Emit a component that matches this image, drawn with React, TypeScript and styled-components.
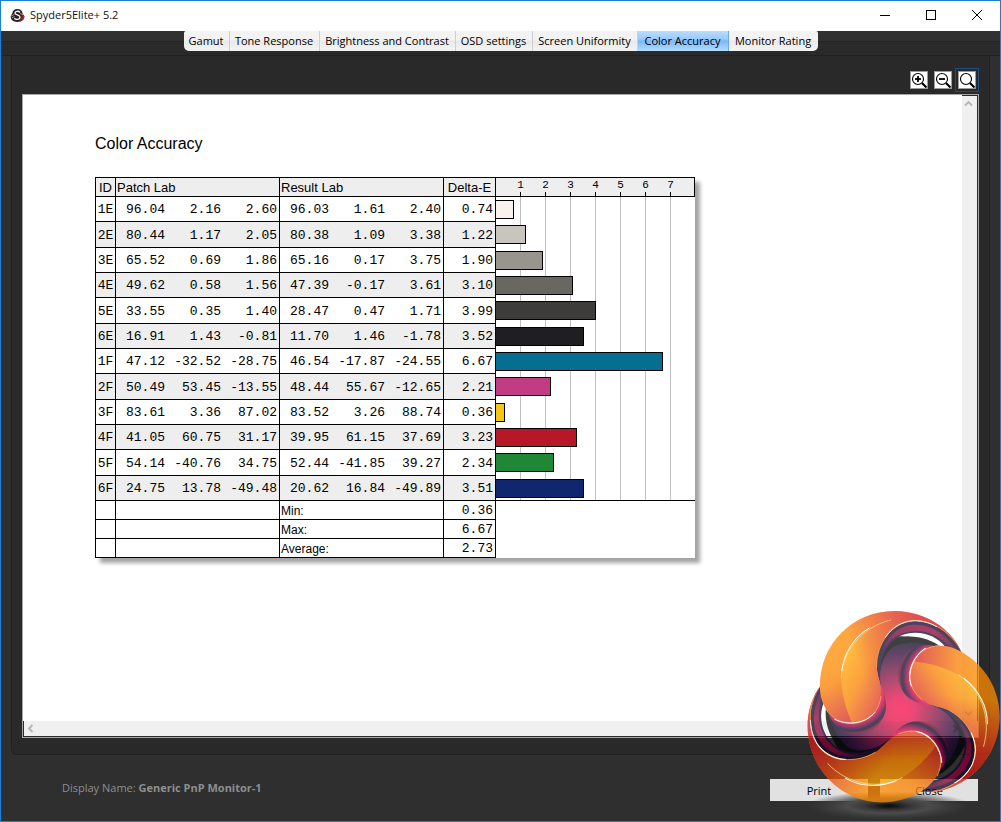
import React from "react";
import styled, { createGlobalStyle, css } from "styled-components";

const ui = `"Open Sans", "Noto Sans", sans-serif`;
const sans = `"Liberation Sans", Arial, sans-serif`;
const mono = `"Liberation Mono", "Courier New", monospace`;

const GlobalStyle = createGlobalStyle`
  *, *::before, *::after { box-sizing: border-box; }
  body { margin: 0; font-family: ${ui}; font-size: 11px; background: #2f2f2f; }
  button { font: inherit; margin: 0; padding: 0; border: 0; }
`;

const Window = styled.div`
  position: relative;
  display: flex;
  flex-direction: column;
  min-height: 100vh;
  border: 1px solid #1a80d6;
  background: #2f2f2f;
`;

const TitleBar = styled.header`
  display: flex;
  align-items: center;
  height: 30px;
  padding: 0 0 2px 9px;
  background: #fff;
  color: #111;
`;

const Title = styled.h1`
  flex: 1;
  margin: 0 0 0 5px;
  font-size: 11px;
  line-height: 16px;
  font-weight: 400;
`;

const WindowButton = styled.button`
  display: grid;
  place-items: center;
  width: 46px;
  height: 28px;
  background: none;
`;

const TabStrip = styled.nav`
  display: flex;
  justify-content: center;
  align-items: flex-start;
  height: 25px;
  background: linear-gradient(#313131 0 10px, #232323 10px 11px, #2a2a2a 11px);
  border-bottom: 1px solid #212121;
`;

const TabList = styled.div`
  display: flex;
  height: 20px;
  border-radius: 2px 2px 5px 5px;
  overflow: hidden;
`;

const Tab = styled.button<{ $width: number; $active?: boolean }>`
  width: ${(p) => p.$width}px;
  height: 20px;
  line-height: 20px;
  white-space: nowrap;
  color: #000;
  background: linear-gradient(#f3f3f3 0 9px, #e9e9e9 10px, #f4f4f4);
  border-right: 1px solid #cfcfcf;
  &:last-child { border-right: 0; }
  ${(p) =>
    p.$active &&
    css`
      background: linear-gradient(#b9dcff, #9bcbfd 8px, #7ab8fb 10px, #b5dbff);
      border-right-color: #6fa9e8;
    `}
`;

const Panel = styled.main`
  flex: 1;
  display: flex;
  flex-direction: column;
  margin: 0 10px;
  padding: 0 10px 16px;
  background: #292929;
  border: 1px solid #202020;
  border-top: 0;
  border-radius: 0 0 6px 6px;
`;

const ZoomBar = styled.div`
  display: flex;
  justify-content: flex-end;
  align-items: center;
  gap: 6px;
  height: 38px;
  padding: 9px 3px 0 0;
`;

const ZoomButton = styled.button<{ $focused?: boolean }>`
  width: 18px;
  height: 18px;
  background: #fff;
  border: 1px solid #9a9a9a;
  outline: ${(p) => (p.$focused ? "1px solid #1b4f80" : "none")};
  outline-offset: 2px;
  svg { display: block; }
`;

const Viewer = styled.section`
  flex: 1;
  display: grid;
  grid-template-columns: 1fr 16px;
  grid-template-rows: 1fr 16px;
  border: 1px solid #a6a6a6;
  background: #f0f0f0;
`;

const Sheet = styled.article`
  padding: 39px 72px 60px;
  background: #fff;
  color: #000;
  font-family: ${sans};
`;

const SheetTitle = styled.h2`
  margin: 0 0 23px;
  font-size: 16px;
  line-height: 20px;
  font-weight: 400;
`;

const VerticalScroll = styled.div`
  display: flex;
  flex-direction: column;
  justify-content: space-between;
  align-items: flex-start;
  background: #f0f0f0;
  border-top: 1px solid #2b2b2b;
  border-right: 1px solid #2b2b2b;
`;

const HorizontalScroll = styled.div`
  display: flex;
  justify-content: space-between;
  background: #f0f0f0;
  border-left: 1px solid #2b2b2b;
  border-bottom: 1px solid #2b2b2b;
`;

const ScrollButton = styled.button`
  display: grid;
  place-items: center;
  width: 13px;
  height: 15px;
  background: none;
`;

const Report = styled.table`
  width: 600px;
  table-layout: fixed;
  border-collapse: separate;
  border-spacing: 0;
  background: #fff;
  box-shadow: 5px 5px 4px rgba(0, 0, 0, 0.36);
  font-size: 13px;
`;

const HeadCell = styled.th<{ $align?: string }>`
  height: 20px;
  padding: 2px 1px 0;
  background: #eee;
  border: solid #000;
  border-width: 1px 1px 1px 0;
  font-weight: 400;
  line-height: 16px;
  text-align: ${(p) => p.$align ?? "left"};
  &:first-child { border-left-width: 1px; }
`;

const AxisHead = styled(HeadCell)`
  padding-top: 0;
  font-family: ${mono};
  font-size: 11px;
`;

const Axis = styled.div`
  display: flex;
  padding-left: 11px;
`;

const AxisMark = styled.span`
  display: flex;
  flex-direction: column;
  align-items: center;
  width: 25px;
  height: 18px;
  line-height: 14px;
  &::after {
    content: "";
    width: 1px;
    height: 4px;
    background: #000;
  }
`;

const Row = styled.tr`
  height: 25px;
  &:nth-child(3n + 2) { height: 26px; }
  &:nth-child(even) > * { background-color: #eee; }
`;

const cell = css`
  padding: 2px 2px 0 0;
  border: solid #000;
  border-width: 0 1px 1px 0;
  font-family: ${mono};
  line-height: 16px;
  font-weight: 400;
  &:first-child { border-left-width: 1px; }
`;

const IdCell = styled.th`
  ${cell}
  text-align: center;
  padding: 2px 0 0;
`;

const NumberCell = styled.td`
  ${cell}
  text-align: right;
`;

const Lab = styled.div`
  display: grid;
  grid-template-columns: 1fr 56px 56px;
`;

const PlotCell = styled.td<{ $last: boolean }>`
  padding: 0;
  vertical-align: top;
  border-bottom: ${(p) => (p.$last ? "1px solid #000" : "0")};
  tr:nth-child(n) > & {
    background: repeating-linear-gradient(90deg, #fff 0 24px, #c0c0c0 24px 25px);
  }
`;

const Bar = styled.div<{ $color: string }>`
  height: 19px;
  margin-top: 3px;
  background: ${(p) => p.$color};
  border: 1px solid #000;
  border-left: 0;
`;

const SummaryRow = styled.tr`
  height: 19px;
`;

const SummaryLabel = styled.th`
  ${cell}
  padding: 2px 0 0 1px;
  font-family: ${sans};
  font-size: 12px;
  text-align: left;
`;

const SummarySpace = styled.td`
  padding: 0;
`;

const Footer = styled.footer`
  display: flex;
  align-items: center;
  gap: 12px;
  height: 66px;
  padding: 4px 22px 0 61px;
`;

const DisplayName = styled.p`
  flex: 1;
  margin: 0;
  padding-bottom: 4px;
  line-height: 16px;
  color: #8e8e8e;
`;

const ActionButton = styled.button`
  width: 98px;
  height: 22px;
  background: #e1e1e1;
  color: #000;
`;

const Watermark = styled.svg`
  position: absolute;
  right: -1px;
  bottom: -1px;
  width: 241px;
  height: 222px;
  pointer-events: none;
`;

const tabs = [
  { label: "Gamut", width: 46 },
  { label: "Tone Response", width: 90 },
  { label: "Brightness and Contrast", width: 136 },
  { label: "OSD settings", width: 77 },
  { label: "Screen Uniformity", width: 105 },
  { label: "Color Accuracy", width: 91, active: true },
  { label: "Monitor Rating", width: 89 },
];

type Patch = { id: string; patch: string[]; result: string[]; delta: string; color: string };

const patches: Patch[] = [
  { id: "1E", patch: ["96.04", "2.16", "2.60"], result: ["96.03", "1.61", "2.40"], delta: "0.74", color: "#f9f1ee" },
  { id: "2E", patch: ["80.44", "1.17", "2.05"], result: ["80.38", "1.09", "3.38"], delta: "1.22", color: "#c8c4be" },
  { id: "3E", patch: ["65.52", "0.69", "1.86"], result: ["65.16", "0.17", "3.75"], delta: "1.90", color: "#98958e" },
  { id: "4E", patch: ["49.62", "0.58", "1.56"], result: ["47.39", "-0.17", "3.61"], delta: "3.10", color: "#686761" },
  { id: "5E", patch: ["33.55", "0.35", "1.40"], result: ["28.47", "0.47", "1.71"], delta: "3.99", color: "#3d3c3b" },
  { id: "6E", patch: ["16.91", "1.43", "-0.81"], result: ["11.70", "1.46", "-1.78"], delta: "3.52", color: "#1f1f21" },
  { id: "1F", patch: ["47.12", "-32.52", "-28.75"], result: ["46.54", "-17.87", "-24.55"], delta: "6.67", color: "#066f91" },
  { id: "2F", patch: ["50.49", "53.45", "-13.55"], result: ["48.44", "55.67", "-12.65"], delta: "2.21", color: "#c23c83" },
  { id: "3F", patch: ["83.61", "3.36", "87.02"], result: ["83.52", "3.26", "88.74"], delta: "0.36", color: "#f5c614" },
  { id: "4F", patch: ["41.05", "60.75", "31.17"], result: ["39.95", "61.15", "37.69"], delta: "3.23", color: "#b71726" },
  { id: "5F", patch: ["54.14", "-40.76", "34.75"], result: ["52.44", "-41.85", "39.27"], delta: "2.34", color: "#1f8735" },
  { id: "6F", patch: ["24.75", "13.78", "-49.48"], result: ["20.62", "16.84", "-49.89"], delta: "3.51", color: "#10266e" },
];

const summary = [
  ["Min:", "0.36"],
  ["Max:", "6.67"],
  ["Average:", "2.73"],
];

function AppIcon() {
  return (
    <svg width="15" height="15" viewBox="0 0 45 45" aria-hidden="true">
      <path d="M22 3C32 3 37 8 38 17L43 25C43 36 34 42 22 42C10 42 2 36 2 25L7 16C8 8 13 3 22 3Z" fill="#262224" />
      <path d="M36 15L43 25C43 36 35 41 26 41C34 34 38 25 36 15Z" fill="#a81f2c" />
      <path d="M30 13C26 8 15 9 15 15C15 22 30 20 30 28C30 35 18 36 13 31" fill="none" stroke="#fff" strokeWidth="4" />
      <path d="M4 24L13 19M5 29L14 26M30 17L39 19" stroke="#ddd" strokeWidth="2" />
    </svg>
  );
}

function Magnifier({ sign }: { sign?: "plus" | "minus" }) {
  return (
    <svg width="16" height="16" viewBox="0 0 16 16" fill="none" stroke="#000" aria-hidden="true">
      <circle cx="7" cy="7" r="5.5" strokeWidth="1.1" />
      <path d="M11 11L15.5 15.5" strokeWidth="2.2" />
      {sign && <path d="M4 7H10" strokeWidth="1.8" />}
      {sign === "plus" && <path d="M7 4V10" strokeWidth="1.8" />}
    </svg>
  );
}

const turns = { up: 0, right: 90, down: 180, left: 270 };

function Chevron({ to }: { to: keyof typeof turns }) {
  return (
    <svg width="9" height="9" viewBox="0 0 9 9" fill="none" stroke="#b4b4b4" strokeWidth="1.8" aria-hidden="true">
      <path d="M1 6.5L4.5 3L8 6.5" transform={`rotate(${turns[to]} 4.5 4.5)`} />
    </svg>
  );
}

const lobe =
  "M180 265C176 132 278 33 405 33C496 35 574 84 606 160C574 98 520 62 462 62C392 68 350 132 350 196C350 226 362 244 363 272C362 332 322 371 278 370C218 368 181 322 180 265Z";

function Logo() {
  const angles = [0, 120, 240];
  return (
    <Watermark viewBox="0 0 723 666" aria-hidden="true">
      <defs>
        <radialGradient id="core" gradientUnits="userSpaceOnUse" cx="422" cy="330" r="222">
          <stop offset="0" stopColor="#f80a48" />
          <stop offset="0.18" stopColor="#e50d48" />
          <stop offset="0.5" stopColor="#7c1040" />
          <stop offset="0.76" stopColor="#2c0838" />
          <stop offset="0.93" stopColor="#0c0624" />
          <stop offset="1" stopColor="#000" />
        </radialGradient>
        <linearGradient id="outer" gradientUnits="userSpaceOnUse" x1="190" y1="200" x2="270" y2="350">
          <stop offset="0" stopColor="#ff8c00" />
          <stop offset="0.35" stopColor="#fa7e00" />
          <stop offset="1" stopColor="#d8301c" />
        </linearGradient>
        <linearGradient id="leaf" gradientUnits="userSpaceOnUse" x1="250" y1="200" x2="375" y2="265">
          <stop offset="0" stopColor="#ffa200" />
          <stop offset="0.45" stopColor="#fa8200" />
          <stop offset="1" stopColor="#e03c1c" />
        </linearGradient>
        <linearGradient id="tail" gradientUnits="userSpaceOnUse" x1="270" y1="130" x2="480" y2="40">
          <stop offset="0" stopColor="#da2418" stopOpacity="0" />
          <stop offset="0.7" stopColor="#da2418" stopOpacity="0.9" />
          <stop offset="1" stopColor="#d4141c" />
        </linearGradient>
        <linearGradient id="band" gradientUnits="userSpaceOnUse" x1="355" y1="190" x2="600" y2="130">
          <stop offset="0" stopColor="#0c0428" />
          <stop offset="0.3" stopColor="#7c0034" />
          <stop offset="0.75" stopColor="#8c0034" />
          <stop offset="1" stopColor="#240428" />
        </linearGradient>
        <radialGradient id="crescent" gradientUnits="userSpaceOnUse" cx="276" cy="275" r="132">
          <stop offset="0.7" stopColor="#e60046" />
          <stop offset="0.79" stopColor="#80003a" />
          <stop offset="0.87" stopColor="#12062c" />
          <stop offset="0.91" stopColor="#1c0622" />
          <stop offset="0.93" stopColor="#5c0424" stopOpacity="0.8" />
          <stop offset="1" stopColor="#5c0424" stopOpacity="0.3" />
        </radialGradient>
        <radialGradient id="ground">
          <stop offset="0" stopColor="#090909" />
          <stop offset="0.3" stopColor="#3a3a3a" />
          <stop offset="0.5" stopColor="#4c4c4c" />
          <stop offset="1" stopColor="#3a3a3a" stopOpacity="0" />
        </radialGradient>
        <clipPath id="lobe-clip">
          <path d={lobe} />
        </clipPath>
      </defs>
      <ellipse cx="385" cy="618" rx="250" ry="44" fill="url(#ground)" />
      <g opacity="0.75">
        <circle cx="422" cy="330" r="221" fill="url(#core)" />
        {angles.map((a) => (
          <g key={a} transform={`rotate(${a} 422 330)`}>
            <path d="M352 166C372 136 400 116 440 110C480 108 520 122 545 143C500 124 440 122 404 138C376 154 362 190 358 232C350 214 348 190 352 166Z" fill="#000" />
            <path d="M206 340C222 392 270 412 316 400C366 382 386 332 376 296C372 272 360 250 350 220L250 240Z" fill="url(#crescent)" />
            <path d="M363 262C346 225 344 165 368 120C390 78 425 60 465 60C530 62 588 108 608 166L600 186C590 168 572 152 556 141C528 104 470 86 420 108C380 130 352 175 363 262Z" fill="#10052a" />
            <path d="M358 200C358 140 392 90 446 76C514 66 566 108 598 164C582 146 568 136 556 129C522 94 466 82 418 104C384 120 362 158 358 200Z" fill="url(#band)" />
          </g>
        ))}
        {angles.map((a) => (
          <g key={a} transform={`rotate(${a} 422 330)`}>
            <path d={lobe} fill="url(#outer)" />
            <g clipPath="url(#lobe-clip)">
              <path d="M440 52C330 54 246 130 244 228C244 280 258 330 278 372L480 380L480 52Z" fill="url(#leaf)" />
            </g>
            <path d={lobe} fill="url(#tail)" />
          </g>
        ))}
      </g>
      {angles.map((a) => (
        <g key={a} transform={`rotate(${a} 422 330)`} fill="none" strokeLinecap="round">
          <path d="M350 200C350 132 392 68 462 62C510 62 560 90 586 124" stroke="#f6b04c" strokeWidth="2" />
          <path d="M376 112C396 82 424 64 462 62C488 62 510 68 530 80" stroke="#fff3dc" strokeWidth="3" />
          <path d="M196 326C218 358 246 370 278 370C322 369 356 338 363 290" stroke="#ffc65c" strokeWidth="2" />
          <path d="M224 358C262 378 316 371 344 338" stroke="#fff" strokeWidth="3" />
          <path d="M244 232C246 158 302 82 392 60" stroke="#ffdc92" strokeWidth="2" />
          <path d="M245 212C252 158 284 108 328 84" stroke="#fff" strokeWidth="3" />
        </g>
      ))}
    </Watermark>
  );
}

function LabValues({ values }: { values: string[] }) {
  return (
    <Lab>
      {values.map((v, i) => (
        <span key={i}>{v}</span>
      ))}
    </Lab>
  );
}

function ReportTable() {
  return (
    <Report>
      <colgroup>
        <col width="21" />
        <col width="164" />
        <col width="164" />
        <col width="52" />
        <col width="199" />
      </colgroup>
      <thead>
        <tr>
          <HeadCell $align="center">ID</HeadCell>
          <HeadCell>Patch Lab</HeadCell>
          <HeadCell>Result Lab</HeadCell>
          <HeadCell $align="center">Delta-E</HeadCell>
          <AxisHead>
            <Axis>
              {[1, 2, 3, 4, 5, 6, 7].map((n) => (
                <AxisMark key={n}>{n}</AxisMark>
              ))}
            </Axis>
          </AxisHead>
        </tr>
      </thead>
      <tbody>
        {patches.map((p, i) => (
          <Row key={p.id}>
            <IdCell scope="row">{p.id}</IdCell>
            <NumberCell><LabValues values={p.patch} /></NumberCell>
            <NumberCell><LabValues values={p.result} /></NumberCell>
            <NumberCell>{p.delta}</NumberCell>
            <PlotCell $last={i === patches.length - 1}>
              <Bar $color={p.color} style={{ width: Math.ceil(Number(p.delta) * 25 - 0.5) }} />
            </PlotCell>
          </Row>
        ))}
      </tbody>
      <tfoot>
        {summary.map(([label, value]) => (
          <SummaryRow key={label}>
            <NumberCell />
            <NumberCell />
            <SummaryLabel scope="row">{label}</SummaryLabel>
            <NumberCell>{value}</NumberCell>
            <SummarySpace />
          </SummaryRow>
        ))}
      </tfoot>
    </Report>
  );
}

export default function App() {
  return (
    <>
      <GlobalStyle />
      <Window>
        <TitleBar>
          <AppIcon />
          <Title>Spyder5Elite+ 5.2</Title>
          <WindowButton aria-label="Minimize">
            <svg width="10" height="10"><path d="M0 5.5H10" stroke="#000" /></svg>
          </WindowButton>
          <WindowButton aria-label="Maximize">
            <svg width="10" height="10"><rect x="0.5" y="0.5" width="9" height="9" fill="none" stroke="#000" /></svg>
          </WindowButton>
          <WindowButton aria-label="Close window">
            <svg width="10" height="10"><path d="M0 0L10 10M10 0L0 10" stroke="#000" /></svg>
          </WindowButton>
        </TitleBar>
        <TabStrip>
          <TabList role="tablist">
            {tabs.map((t) => (
              <Tab key={t.label} role="tab" aria-selected={!!t.active} $width={t.width} $active={t.active}>
                {t.label}
              </Tab>
            ))}
          </TabList>
        </TabStrip>
        <Panel>
          <ZoomBar>
            <ZoomButton aria-label="Zoom in"><Magnifier sign="plus" /></ZoomButton>
            <ZoomButton aria-label="Zoom out"><Magnifier sign="minus" /></ZoomButton>
            <ZoomButton aria-label="Fit page" $focused><Magnifier /></ZoomButton>
          </ZoomBar>
          <Viewer>
            <Sheet>
              <SheetTitle>Color Accuracy</SheetTitle>
              <ReportTable />
            </Sheet>
            <VerticalScroll>
              <ScrollButton aria-label="Scroll up"><Chevron to="up" /></ScrollButton>
              <ScrollButton aria-label="Scroll down"><Chevron to="down" /></ScrollButton>
            </VerticalScroll>
            <HorizontalScroll>
              <ScrollButton aria-label="Scroll left"><Chevron to="left" /></ScrollButton>
              <ScrollButton aria-label="Scroll right"><Chevron to="right" /></ScrollButton>
            </HorizontalScroll>
          </Viewer>
        </Panel>
        <Footer>
          <DisplayName>
            Display Name: <strong>Generic PnP Monitor-1</strong>
          </DisplayName>
          <ActionButton>Print</ActionButton>
          <ActionButton>Close</ActionButton>
        </Footer>
        <Logo />
      </Window>
    </>
  );
}
